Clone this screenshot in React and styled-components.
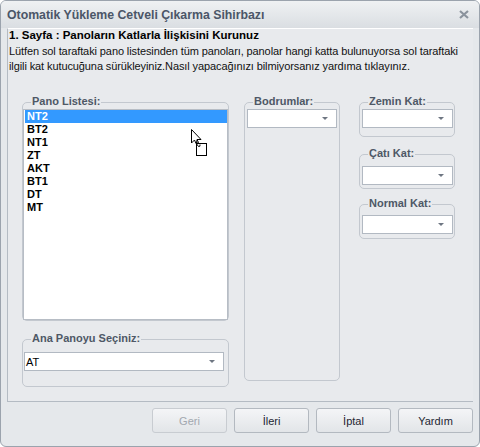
import React from "react";
import styled, { createGlobalStyle } from "styled-components";

const GlobalStyle = createGlobalStyle`
  html, body {
    margin: 0;
    padding: 0;
    background: #ffffff;
  }
  * {
    box-sizing: border-box;
  }
`;

const panoList = ["NT2", "BT2", "NT1", "ZT", "AKT", "BT1", "DT", "MT"];

const Window = styled.div`
  position: relative;
  width: 480px;
  height: 447px;
  border: 1px solid #9ba3ad;
  border-radius: 6px;
  background: #e5e8eb;
  font-family: "Liberation Sans", Arial, sans-serif;
  overflow: hidden;
`;

const TitleBar = styled.div`
  height: 27px;
  display: flex;
  align-items: center;
  justify-content: space-between;
  padding: 0 10px 0 6px;
  background: linear-gradient(#eff1f3, #dadee2);
`;

const Title = styled.div`
  font-size: 12.3px;
  font-weight: bold;
  color: #4b5668;
`;

const Panel = styled.div`
  margin-left: 6px;
  width: 466px;
  height: 374px;
  border-top: 1px solid #ffffff;
  border-left: 1px solid #b4bbc3;
  border-bottom: 1px solid #b4bbc3;
  background: #e8eaed;
  padding: 0 0 0 1px;
`;

const Heading = styled.div`
  font-size: 11.5px;
  font-weight: bold;
  color: #000;
  line-height: 13px;
  height: 14px;
`;

const Description = styled.div`
  margin-top: 1px;
  font-size: 11px;
  line-height: 15px;
  color: #111;
  letter-spacing: -0.1px;
`;

const Columns = styled.div`
  display: flex;
  margin-top: 28px;
  padding-left: 13px;
`;

const Column = styled.div`
  display: flex;
  flex-direction: column;
  width: ${(p) => p.$w}px;
  margin-right: ${(p) => p.$gap || 0}px;
`;

const Group = styled.div`
  position: relative;
  height: ${(p) => p.$h}px;
  margin-top: ${(p) => p.$mt || 0}px;
  border: 1px solid #c3c8cf;
  border-radius: 5px;
  padding: ${(p) => p.$pad || "6px 2px 0 2px"};
`;

const Legend = styled.span`
  position: absolute;
  top: -8px;
  left: 8px;
  padding: 0 1px;
  background: #e8eaed;
  font-size: 11px;
  font-weight: bold;
  color: #4e5866;
  line-height: 13px;
`;

const ListBox = styled.div`
  height: 211px;
  margin: 0 -1px;
  background: #ffffff;
  border: 1px solid #b7bdc5;
  padding: 0 0 0 1px;
`;

const ListItem = styled.div`
  height: 13px;
  line-height: 13px;
  padding-left: 2px;
  font-size: 11px;
  font-weight: bold;
  color: ${(p) => (p.$selected ? "#ffffff" : "#000000")};
  background: ${(p) => (p.$selected ? "#3399ff" : "transparent")};
`;

const Combo = styled.div`
  height: 19px;
  background: #ffffff;
  border: 1px solid #b2b9c2;
  display: flex;
  align-items: center;
  justify-content: space-between;
  padding: 0 8px 0 1px;
  font-size: 11px;
  color: #000;
`;

const Arrow = styled.span`
  width: 0;
  height: 0;
  border-left: 3px solid transparent;
  border-right: 3px solid transparent;
  border-top: 3px solid #6e7682;
`;

const ButtonRow = styled.div`
  display: flex;
  justify-content: flex-end;
  gap: 7px;
  padding: 6px 6px 0 0;
`;

const Button = styled.div`
  width: 75px;
  height: 25px;
  border: 1px solid #b3b9c0;
  border-radius: 3px;
  background: linear-gradient(#f4f5f7, #e2e5e8);
  display: flex;
  align-items: center;
  justify-content: center;
  font-size: 11px;
  color: ${(p) => (p.$disabled ? "#a2a8af" : "#1e2633")};
  border-color: ${(p) => (p.$disabled ? "#c8ccd1" : "#b3b9c0")};
`;

const Cursor = styled.svg`
  position: absolute;
  left: 190px;
  top: 128px;
`;

const ComboBox = ({ value }) => (
  <Combo>
    <span>{value}</span>
    <Arrow />
  </Combo>
);

export default function App() {
  return (
    <>
      <GlobalStyle />
      <Window>
        <TitleBar>
          <Title>Otomatik Yükleme Cetveli Çıkarma Sihirbazı</Title>
          <svg width="10" height="9" viewBox="0 0 10 9">
            <path d="M1 1 L9 8 M9 1 L1 8" stroke="#8b939d" strokeWidth="2.2" />
          </svg>
        </TitleBar>
        <Panel>
          <Heading>1. Sayfa : Panoların Katlarla İlişkisini Kurunuz</Heading>
          <Description>
            Lütfen sol taraftaki pano listesinden tüm panoları, panolar hangi katta bulunuyorsa sol taraftaki
            <br />
            ilgili kat kutucuğuna sürükleyiniz.Nasıl yapacağınızı bilmiyorsanız yardıma tıklayınız.
          </Description>
          <Columns>
            <Column $w={207} $gap={15}>
              <Group $h={219} $pad="6px 1px 0 1px">
                <Legend>Pano Listesi:</Legend>
                <ListBox>
                  {panoList.map((p, i) => (
                    <ListItem key={p} $selected={i === 0}>
                      {p}
                    </ListItem>
                  ))}
                </ListBox>
              </Group>
              <Group $h={48} $mt={18} $pad="12px 4px 0 1px">
                <Legend>Ana Panoyu Seçiniz:</Legend>
                <ComboBox value="AT" />
              </Group>
            </Column>
            <Column $w={96} $gap={19}>
              <Group $h={279}>
                <Legend>Bodrumlar:</Legend>
                <ComboBox />
              </Group>
            </Column>
            <Column $w={96}>
              <Group $h={35} $pad="6px 1px 0 2px">
                <Legend>Zemin Kat:</Legend>
                <ComboBox />
              </Group>
              <Group $h={35} $mt={17} $pad="11px 1px 0 2px">
                <Legend>Çatı Kat:</Legend>
                <ComboBox />
              </Group>
              <Group $h={35} $mt={15} $pad="10px 1px 0 2px">
                <Legend>Normal Kat:</Legend>
                <ComboBox />
              </Group>
            </Column>
          </Columns>
        </Panel>
        <ButtonRow>
          <Button $disabled>Geri</Button>
          <Button>İleri</Button>
          <Button>İptal</Button>
          <Button>Yardım</Button>
        </ButtonRow>
        <Cursor width="17" height="28" viewBox="0 0 17 28">
          <path d="M0.5 0.5 L0.5 14 L3.5 11 L5 14.5 L7.5 13.5 L6 10.5 L10 10.5 Z" fill="#ffffff" stroke="#000" strokeWidth="1" />
          <rect x="5.5" y="14.5" width="10" height="12" fill="#ffffff" stroke="#000" strokeWidth="1" />
          <path d="M6 11 Q4 15 7.5 17.5 Q9.5 18 9 15.5" fill="none" stroke="#000" strokeWidth="1" />
        </Cursor>
      </Window>
    </>
  );
}
